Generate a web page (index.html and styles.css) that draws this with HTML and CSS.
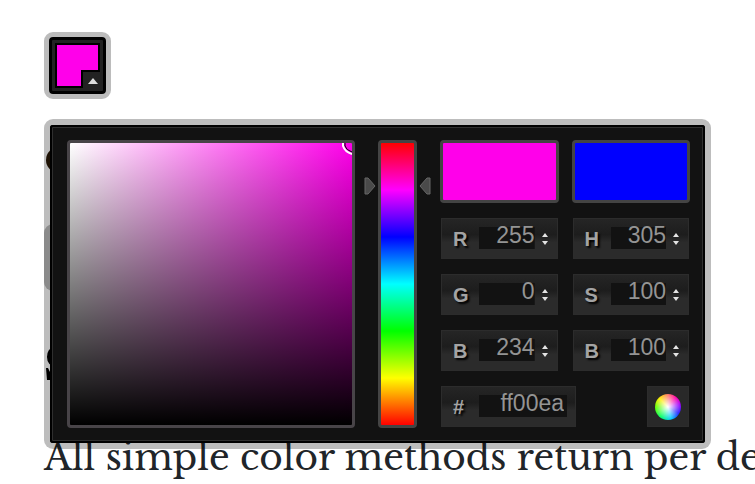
FILE: index.html
```html
<!doctype html>
<html lang="en">
<head>
  <meta charset="UTF-8">
  <meta name="viewport" content="width=device-width, initial-scale=1.0">
  <title>Color Picker</title>
  <link rel="stylesheet" href="styles.css">
</head>
<body>
  <main class="page">
    <div class="picker">
      <button type="button" class="trigger" aria-label="Choose color" aria-expanded="true">
        <svg viewBox="0 0 57 57">
          <path d="M7 7h43v27H33v16H7z" fill="#ff00ea" stroke="#000" stroke-width="2"/>
          <path d="M39 47l5-6 5 6z" fill="#ddd"/>
        </svg>
      </button>

      <div class="panel">
        <div class="shade">
          <svg class="shade-cursor" viewBox="0 0 12 12">
            <path d="M5 0v3q1 4 7 6" fill="none" stroke="#000" stroke-width="1"/>
            <path d="M3 0v3q2 6 9 8" fill="none" stroke="#fff" stroke-width="2"/>
          </svg>
        </div>

        <div class="hue">
          <svg class="arrow" viewBox="0 0 12 18"><path d="M1 1h3l7 8-7 8H1z" fill="#4a4a4a" stroke="#666"/></svg>
          <div class="hue-bar"></div>
          <svg class="arrow" viewBox="0 0 12 18"><path d="M11 1H8L1 9l7 8h3z" fill="#4a4a4a" stroke="#666"/></svg>
        </div>

        <form class="values">
          <div class="swatch swatch-new"></div>
          <div class="swatch swatch-current"></div>

          <div class="field">
            <label for="red">R</label>
            <input type="text" id="red" value="255">
            <svg class="spin" viewBox="0 0 8 14"><path d="M1 5l3-4 3 4zM1 9l3 4 3-4z"/></svg>
          </div>
          <div class="field">
            <label for="hue">H</label>
            <input type="text" id="hue" value="305">
            <svg class="spin" viewBox="0 0 8 14"><path d="M1 5l3-4 3 4zM1 9l3 4 3-4z"/></svg>
          </div>
          <div class="field">
            <label for="green">G</label>
            <input type="text" id="green" value="0">
            <svg class="spin" viewBox="0 0 8 14"><path d="M1 5l3-4 3 4zM1 9l3 4 3-4z"/></svg>
          </div>
          <div class="field">
            <label for="saturation">S</label>
            <input type="text" id="saturation" value="100">
            <svg class="spin" viewBox="0 0 8 14"><path d="M1 5l3-4 3 4zM1 9l3 4 3-4z"/></svg>
          </div>
          <div class="field">
            <label for="blue">B</label>
            <input type="text" id="blue" value="234">
            <svg class="spin" viewBox="0 0 8 14"><path d="M1 5l3-4 3 4zM1 9l3 4 3-4z"/></svg>
          </div>
          <div class="field">
            <label for="brightness">B</label>
            <input type="text" id="brightness" value="100">
            <svg class="spin" viewBox="0 0 8 14"><path d="M1 5l3-4 3 4zM1 9l3 4 3-4z"/></svg>
          </div>

          <div class="bottom">
            <div class="field field-hex">
              <label for="hex">#</label>
              <input type="text" id="hex" value="ff00ea">
            </div>
            <button type="button" class="submit" aria-label="Apply color"><span class="wheel"></span></button>
          </div>
        </form>
      </div>
    </div>

    <!-- page content the open panel lies over -->
    <div class="behind">
      <span class="dot"></span>
      <span class="block"></span>
      <svg class="mark" viewBox="0 0 12 36"><path d="M12 0Q3 2 3 11t9 9zM2 22h2l3 6h5v6H3z"/></svg>
    </div>

    <p class="text">All simple color methods return per default</p>
  </main>
</body>
</html>
```
FILE: styles.css
```css
* {
  box-sizing: border-box;
}
body {
  margin: 0;
  background: #fff;
  color: #212529;
  overflow: hidden;
}
.page {
  padding: 32px 44px 0;
}
.picker {
  position: relative;
}
.trigger {
  display: block;
  width: 67px;
  height: 67px;
  padding: 0;
  border: 5px solid #bcbcbc;
  border-radius: 9px;
  background: #222;
  box-shadow: inset 0 0 0 3px #000;
}
.trigger svg {
  display: block;
  width: 57px;
  height: 57px;
}
.panel {
  position: absolute;
  z-index: 1;
  top: 87px;
  left: 0;
  display: flex;
  width: 667px;
  padding: 15px;
  border: 6px solid rgba(0, 0, 0, 0.26);
  border-radius: 9px;
  background: #121212;
  background-clip: padding-box;
  box-shadow: inset 0 0 0 2px #000, inset 0 0 0 3px #2f2f2f;
}
.shade {
  position: relative;
  flex: none;
  width: 288px;
  height: 288px;
  margin-left: 2px;
  border: 3px solid #484448;
  border-radius: 4px;
  background: linear-gradient(to top, #000, transparent), linear-gradient(to right, #fff, #ff00ea);
  background-origin: padding-box;
}
.shade-cursor {
  position: absolute;
  top: 0;
  right: 0;
  width: 12px;
  height: 12px;
}
.hue {
  display: flex;
  flex: none;
  gap: 2px;
  margin: 0 9px;
}
.hue-bar {
  width: 39px;
  border: 3px solid #444;
  border-radius: 4px;
  background: linear-gradient(to bottom, #f00, #f0f, #00f, #0ff, #0f0, #ff0, #f00);
  background-origin: padding-box;
}
.arrow {
  width: 12px;
  height: 18px;
  margin-top: 37px;
}
.values {
  display: grid;
  flex: 1;
  grid-template-columns: repeat(2, minmax(0, 1fr));
  grid-template-rows: 63px repeat(4, 41px);
  gap: 15px 13px;
}
.swatch {
  border: 3px solid #444;
  border-radius: 4px;
}
.swatch-new {
  background: #ff00ea;
}
.swatch-current {
  background: #00f;
}
.field {
  display: flex;
  align-items: center;
  margin: 0 1px;
  padding: 0 8px 0 11px;
  border: 1px solid #2c2c2c;
  background: linear-gradient(to bottom, #252525, #1d1d1d 40%, #2b2b2b 60%, #2b2b2b);
  font-family: "Liberation Sans", Arial, sans-serif;
}
.field label {
  width: 26px;
  color: #a4a4a4;
  font-size: 20px;
  font-weight: bold;
  line-height: 24px;
  text-shadow: 2px 2px 2px #000;
}
/* the dark well starts below the top of the digits */
.field input {
  flex: 1;
  align-self: flex-start;
  min-width: 0;
  height: 27px;
  margin-top: 3px;
  padding: 0;
  border: 0;
  background: linear-gradient(#121212, #121212) bottom / 100% 22px no-repeat;
  color: #949494;
  font-family: inherit;
  font-size: 23px;
  text-align: right;
}
.spin {
  width: 8px;
  height: 14px;
  margin-left: 6px;
  fill: #e4e4e4;
}
.bottom {
  display: flex;
  grid-column: 1 / -1;
  justify-content: space-between;
}
.field-hex {
  width: 135px;
}
.field-hex input {
  padding-right: 3px;
}
.submit {
  display: flex;
  align-items: center;
  justify-content: center;
  width: 42px;
  margin-right: 1px;
  padding: 0;
  border: 1px solid #2c2c2c;
  background: #292929;
}
.wheel {
  width: 26px;
  height: 26px;
  border-radius: 50%;
  background: radial-gradient(circle, #fff, transparent 70%), conic-gradient(#f76, #f0a 40deg, #90f 80deg, #22f 120deg, #0cf 165deg, #0f6 215deg, #6f0 270deg, #fe0 315deg, #f76);
}
.behind {
  display: flex;
  flex-direction: column;
  align-items: flex-start;
  padding: 48px 0 54px;
}
.dot {
  width: 26px;
  height: 26px;
  margin-left: 2px;
  border-radius: 50%;
  background: #2a1a08;
}
.block {
  width: 67px;
  height: 67px;
  margin: 51px 0 55px;
  border-radius: 9px;
  background: #bcbcbc;
}
.mark {
  width: 12px;
  height: 36px;
}
.text {
  margin: 0;
  font-family: "Libre Baskerville", "Liberation Serif", serif;
  font-size: 36px;
  line-height: 44px;
  white-space: nowrap;
}
```
